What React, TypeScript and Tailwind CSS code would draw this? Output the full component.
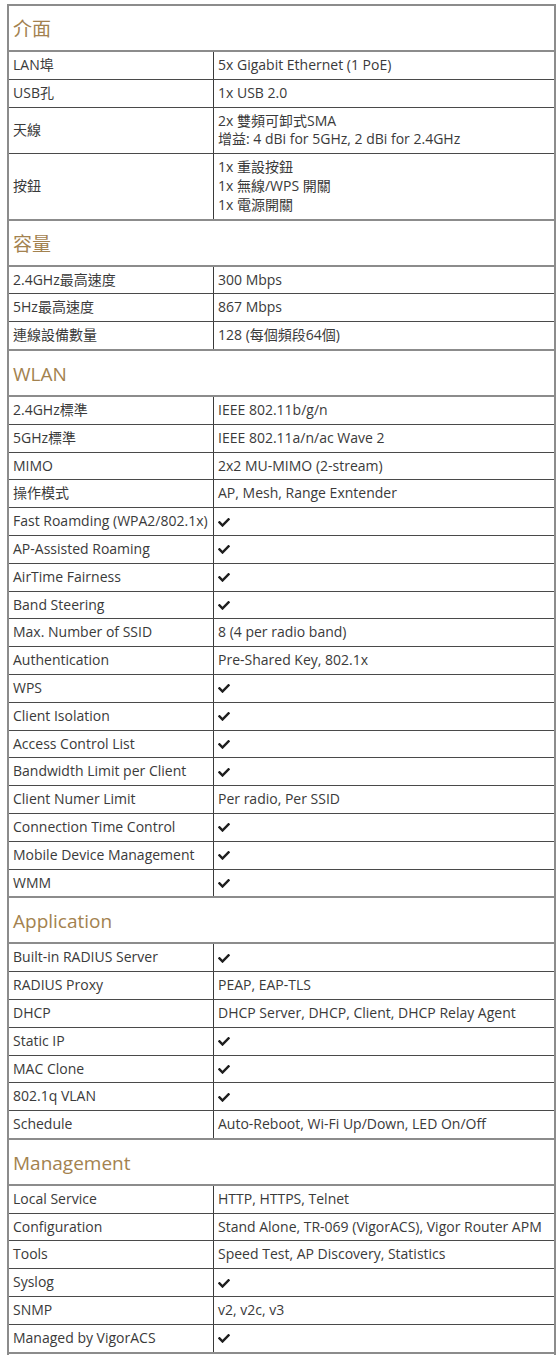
import React from "react";

type Val = string | string[] | true;
type Row = [string, Val];
type Section = { title: string; rows: Row[] };

const sections: Section[] = [
  {
    title: "介面",
    rows: [
      ["LAN埠", "5x Gigabit Ethernet (1 PoE)"],
      ["USB孔", "1x USB 2.0"],
      ["天線", ["2x 雙頻可卸式SMA", "增益: 4 dBi for 5GHz, 2 dBi for 2.4GHz"]],
      ["按鈕", ["1x 重設按鈕", "1x 無線/WPS 開關", "1x 電源開關"]],
    ],
  },
  {
    title: "容量",
    rows: [
      ["2.4GHz最高速度", "300 Mbps"],
      ["5Hz最高速度", "867 Mbps"],
      ["連線設備數量", "128 (每個頻段64個)"],
    ],
  },
  {
    title: "WLAN",
    rows: [
      ["2.4GHz標準", "IEEE 802.11b/g/n"],
      ["5GHz標準", "IEEE 802.11a/n/ac Wave 2"],
      ["MIMO", "2x2 MU-MIMO (2-stream)"],
      ["操作模式", "AP, Mesh, Range Exntender"],
      ["Fast Roamding (WPA2/802.1x)", true],
      ["AP-Assisted Roaming", true],
      ["AirTime Fairness", true],
      ["Band Steering", true],
      ["Max. Number of SSID", "8 (4 per radio band)"],
      ["Authentication", "Pre-Shared Key, 802.1x"],
      ["WPS", true],
      ["Client Isolation", true],
      ["Access Control List", true],
      ["Bandwidth Limit per Client", true],
      ["Client Numer Limit", "Per radio, Per SSID"],
      ["Connection Time Control", true],
      ["Mobile Device Management", true],
      ["WMM", true],
    ],
  },
  {
    title: "Application",
    rows: [
      ["Built-in RADIUS Server", true],
      ["RADIUS Proxy", "PEAP, EAP-TLS"],
      ["DHCP", "DHCP Server, DHCP, Client, DHCP Relay Agent"],
      ["Static IP", true],
      ["MAC Clone", true],
      ["802.1q VLAN", true],
      ["Schedule", "Auto-Reboot, Wi-Fi Up/Down, LED On/Off"],
    ],
  },
  {
    title: "Management",
    rows: [
      ["Local Service", "HTTP, HTTPS, Telnet"],
      ["Configuration", "Stand Alone, TR-069 (VigorACS), Vigor Router APM"],
      ["Tools", "Speed Test, AP Discovery, Statistics"],
      ["Syslog", true],
      ["SNMP", "v2, v2c, v3"],
      ["Managed by VigorACS", true],
    ],
  },
];

function Check() {
  return (
    <svg width="12" height="10" viewBox="0 0 512 420" className="inline-block" aria-hidden>
      <path
        fill="#1e1e1e"
        d="M173.9 411.4L7.5 245c-10-10-10-26.2 0-36.2l36.2-36.2c10-10 26.2-10 36.2 0L192 284.7 432.1 44.6c10-10 26.2-10 36.2 0l36.2 36.2c10 10 10 26.2 0 36.2L210.1 411.4c-10 10-26.2 10-36.2 0z"
      />
    </svg>
  );
}

export default function App() {
  return (
    <div
      className="bg-white h-[1355px] overflow-hidden pt-[4px] pl-[7px]"
      style={{ fontFamily: '"Open Sans", "Noto Sans CJK TC", sans-serif' }}
    >
      <div className="w-[549px] border-x-2 border-t-2 border-[#8c8c8c] text-[#3a3a3a] text-[14px] leading-[18.8px]">
        {sections.map((s) => (
          <div key={s.title}>
            <div className="h-[46px] border-b-2 border-[#8c8c8c] flex items-center pl-[4px] pt-[3px] text-[19px] text-[#a3824f]">
              {s.title}
            </div>
            {s.rows.map(([k, v], i) => (
              <div
                key={k}
                className={
                  "grid grid-cols-[205px_1fr] " +
                  (i === s.rows.length - 1 ? "border-b-2 border-[#8c8c8c]" : "border-b border-[#4a4a4a]")
                }
              >
                <div className="border-r border-[#3a3a3a] flex items-center pl-[4px] py-[4px] whitespace-nowrap">
                  {k}
                </div>
                <div className="pl-[4px] py-[4px] flex flex-col justify-center">
                  {v === true ? (
                    <span className="h-[18.8px] flex items-center">
                      <Check />
                    </span>
                  ) : Array.isArray(v) ? (
                    v.map((l) => <span key={l}>{l}</span>)
                  ) : (
                    <span className="whitespace-nowrap">{v}</span>
                  )}
                </div>
              </div>
            ))}
          </div>
        ))}
        <div className="h-[46px]" />
      </div>
    </div>
  );
}
